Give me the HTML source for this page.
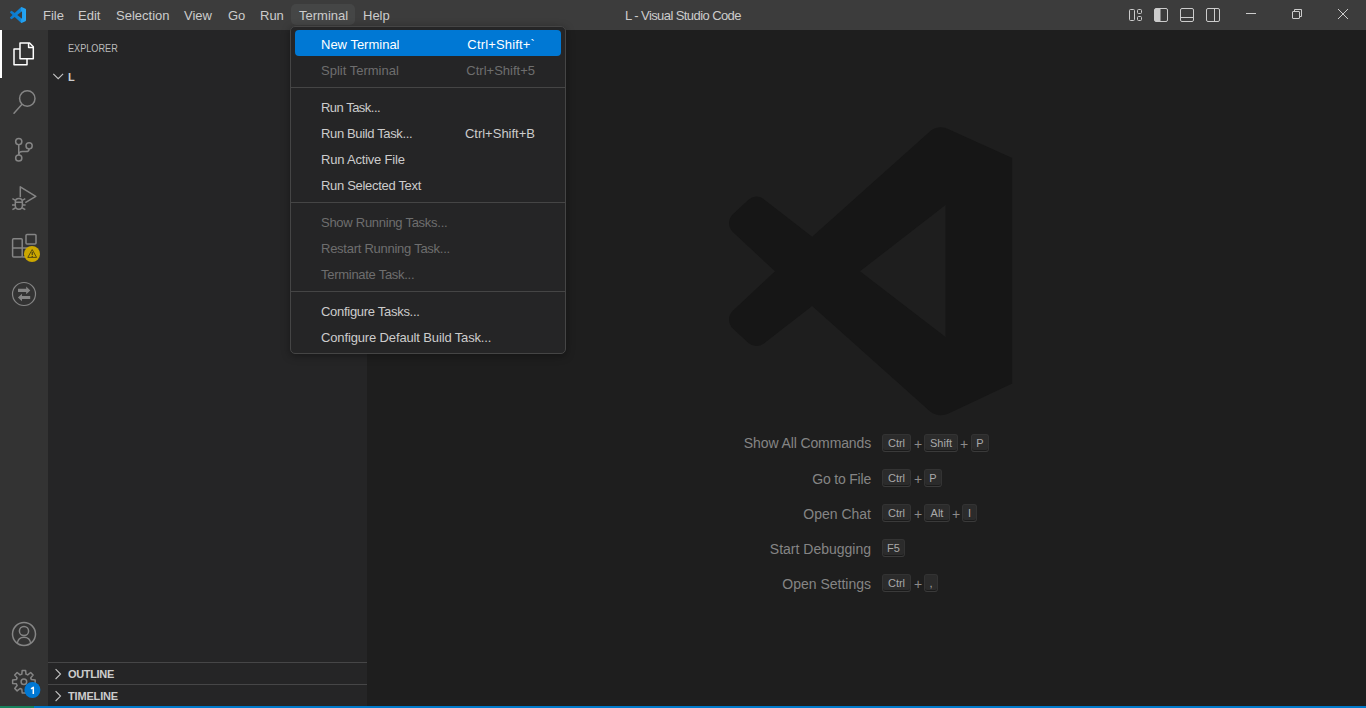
<!DOCTYPE html>
<html><head><meta charset="utf-8">
<style>
*{box-sizing:border-box;margin:0;padding:0}
html,body{width:1366px;height:708px;overflow:hidden;background:#1e1e1e;font-family:"Liberation Sans",sans-serif;color:#cccccc}
.abs{position:absolute}
#title{left:0;top:0;width:1366px;height:30px;background:#3c3c3c}
#act{left:0;top:30px;width:48px;height:676px;background:#333333}
#side{left:48px;top:30px;width:319px;height:676px;background:#252526}
#editor{left:367px;top:30px;width:999px;height:676px;background:#1e1e1e}
#status{left:0;top:706px;width:1366px;height:2px;background:#007acc}
#remote{left:0;top:706px;width:34px;height:2px;background:#16825d}
.mi{position:absolute;top:1px;height:30px;line-height:30px;font-size:13px;color:#cccccc;white-space:pre}
#wintitle{position:absolute;left:0;width:1366px;top:1px;height:30px;line-height:30px;text-align:center;font-size:13px;color:#cccccc}
#menu{left:290px;top:26px;width:276px;height:328px;background:#252526;border:1px solid #454545;border-radius:5px;box-shadow:0 2px 8px rgba(0,0,0,.36)}
.it{position:absolute;left:4px;width:266px;height:26px;line-height:26px;font-size:13px;color:#cccccc;white-space:pre}
.it .l{position:absolute;left:26px;top:2px}
.it .k{position:absolute;right:26px;top:2px}
.it.sel{background:#0078d4;color:#ffffff;border-radius:4px}
.it.dis{color:#6e6e6e}
.sep{position:absolute;left:0;width:274px;height:1px;background:#454545}
.hint{position:absolute;font-size:14px;line-height:16px;color:#858585;white-space:pre;text-align:right;width:200px}
.key{position:absolute;height:18px;line-height:16px;font-size:11px;color:#a9a9a9;background:#2b2b2b;border:1px solid #333333;border-bottom-color:#3a3a3a;border-radius:3px;text-align:center;box-shadow:inset 0 -1px 0 rgba(0,0,0,.36)}
.plus{position:absolute;font-size:14px;line-height:16px;color:#8b8b8b;margin-top:2px}
.sh{position:absolute;left:68px;font-size:11px;font-weight:bold;color:#cccccc;white-space:pre}
</style></head><body>
<div id="title" class="abs">
  <div id="wintitle" style="letter-spacing:-.58px">L - Visual Studio Code</div>
  <span class="mi" style="left:43px">File</span>
  <span class="mi" style="left:78px">Edit</span>
  <span class="mi" style="left:116px">Selection</span>
  <span class="mi" style="left:184px">View</span>
  <span class="mi" style="left:228px">Go</span>
  <span class="mi" style="left:260px">Run</span>
  <div class="abs" style="left:291px;top:4px;width:64px;height:21px;background:rgba(90,93,94,.31);border-radius:5px"></div>
  <span class="mi" style="left:299px">Terminal</span>
  <span class="mi" style="left:363px">Help</span>
</div>
<div id="act" class="abs"></div>
<div id="side" class="abs">
  <div class="abs" style="left:20px;top:11px;font-size:11px;line-height:14px;color:#bbbbbb;white-space:pre;transform:scaleX(.83);transform-origin:0 0">EXPLORER</div>
  <div class="abs" style="left:20px;top:40px;font-size:11px;line-height:14px;font-weight:bold;color:#cccccc">L</div>
  <div class="abs" style="left:0;top:632px;width:319px;height:1px;background:#464647"></div>
  <div class="abs" style="left:0;top:654px;width:319px;height:1px;background:#464647"></div>
  <div class="sh" style="left:20px;top:637px;line-height:14px;letter-spacing:-.33px">OUTLINE</div>
  <div class="sh" style="left:20px;top:659px;line-height:14px;letter-spacing:-.17px">TIMELINE</div>
</div>
<div id="editor" class="abs">
  <div class="hint" style="left:304px;top:405px;letter-spacing:-.11px;margin-left:.11px">Show All Commands</div>
  <div class="hint" style="left:304px;top:441px;letter-spacing:-.19px">Go to File</div>
  <div class="hint" style="left:304px;top:476px">Open Chat</div>
  <div class="hint" style="left:304px;top:511px">Start Debugging</div>
  <div class="hint" style="left:304px;top:546px">Open Settings</div>
</div>
<div id="keys">
  <div class="key" style="left:882px;top:434px;width:29px">Ctrl</div><div class="plus" style="left:914px;top:434px">+</div>
  <div class="key" style="left:924px;top:434px;width:34px">Shift</div><div class="plus" style="left:960px;top:434px">+</div>
  <div class="key" style="left:971px;top:434px;width:18px">P</div>
  <div class="key" style="left:882px;top:469px;width:29px">Ctrl</div><div class="plus" style="left:914px;top:469px">+</div>
  <div class="key" style="left:924px;top:469px;width:18px">P</div>
  <div class="key" style="left:882px;top:504px;width:29px">Ctrl</div><div class="plus" style="left:914px;top:504px">+</div>
  <div class="key" style="left:924px;top:504px;width:26px">Alt</div><div class="plus" style="left:952px;top:504px">+</div>
  <div class="key" style="left:962px;top:504px;width:15px">I</div>
  <div class="key" style="left:882px;top:539px;width:23px">F5</div>
  <div class="key" style="left:882px;top:574px;width:29px">Ctrl</div><div class="plus" style="left:914px;top:574px">+</div>
  <div class="key" style="left:924px;top:574px;width:14px">,</div>
</div>
<div id="status" class="abs"></div>
<div id="remote" class="abs"></div>

<svg class="abs" style="left:0;top:0" width="1366" height="708" viewBox="0 0 1366 708">
  <!-- watermark logo -->
  <g transform="translate(729,126.6) scale(11.8,12.06)" fill="#161616">
    <path d="M24 2.6L18.61.21a1.494 1.494 0 0 0-1.705.29l-9.86 8.63-4.12-3.128a.999.999 0 0 0-1.276.057L.327 7.261A1 1 0 0 0 .326 8.74L3.899 12 .326 15.26a1 1 0 0 0 .001 1.479L1.65 17.94a.999.999 0 0 0 1.276.057l4.12-3.128 9.86 8.63a1.492 1.492 0 0 0 1.704.29L24 21.3V2.6zM18.35 17.45L11.1 12l7.25-5.5z"/>
  </g>
  <!-- activity icons -->
  <rect x="0" y="30" width="2" height="48" fill="#ffffff"/>
  <g fill="none" stroke="#ffffff" stroke-width="1.5" stroke-linejoin="round">
    <path d="M20 58.7V43H29.6L33.3 46.7V58.7Z"/>
    <path d="M28.6 43V47.5H33.3"/>
    <path d="M20 49H14V64.8H27V58.7"/>
  </g>
  <g fill="none" stroke="#858585" stroke-width="1.5">
    <circle cx="27.3" cy="98.5" r="7.7"/>
    <path d="M14 113.2L21.8 104.6" stroke-linecap="round"/>
    <circle cx="18.75" cy="141.6" r="3.1"/>
    <circle cx="29.1" cy="145.8" r="3.1"/>
    <circle cx="18.75" cy="158" r="3.1"/>
    <path d="M18.75 144.7V154.9"/>
    <path d="M29.1 148.9C29.1 151 28 151.6 26 151.6H22.5C20.2 151.6 18.75 152.6 18.75 154.5"/>
    <path d="M20.3 197.2V186.8L35.8 196.3L25.3 202.6" stroke-linejoin="round"/>
    <path d="M15.3 202.2H22.4M15.3 205H12M22.4 205H25.6M15.4 200.3L12.4 198.6M22.3 200.3L25.3 198.6M15.4 208L12.4 209.6M22.3 208L25.3 209.6"/>
    <path d="M15.3 202.2C15.3 199.8 16.8 198.6 18.85 198.6C20.9 198.6 22.4 199.8 22.4 202.2V205.5C22.4 207.7 20.9 209.2 18.85 209.2C16.8 209.2 15.3 207.7 15.3 205.5Z"/>
    <rect x="12.6" y="238.8" width="9.6" height="18.3" rx="1"/>
    <path d="M12.6 248H31V257.1H22.2"/>
    <rect x="26" y="234.5" width="10" height="9.6" rx="1"/>
    <circle cx="24" cy="294" r="11.5" stroke-width="1.2"/>
    <circle cx="24" cy="634" r="11.5"/>
    <circle cx="24" cy="631" r="4.6"/>
    <path d="M17.3 643.5C17.6 639.6 20.4 637.2 24 637.2C27.6 637.2 30.4 639.6 30.7 643.5"/>
    <path d="M21.82 674.18 L22.20 670.43 L25.60 670.43 L25.98 674.18 L27.74 674.91 L30.67 672.52 L33.08 674.93 L30.69 677.86 L31.42 679.62 L35.17 680.00 L35.17 683.40 L31.42 683.78 L30.69 685.54 L33.08 688.47 L30.67 690.88 L27.74 688.49 L25.98 689.22 L25.60 692.97 L22.20 692.97 L21.82 689.22 L20.06 688.49 L17.13 690.88 L14.72 688.47 L17.11 685.54 L16.38 683.78 L12.63 683.40 L12.63 680.00 L16.38 679.62 L17.11 677.86 L14.72 674.93 L17.13 672.52 L20.06 674.91 Z" stroke-linejoin="round"/>
    <circle cx="23.9" cy="681.7" r="2.8"/>
  </g>
  <g fill="#858585">
    <path d="M18 288.8H26.2V286.6L30.3 290.4L26.2 294.2V292H18Z"/>
    <path d="M30.2 295.9H22V293.8L17.9 297.5L22 301.2V299H30.2Z"/>
  </g>
  <circle cx="32" cy="254" r="8" fill="#cca700" stroke="#333333" stroke-width="0"/>
  <path d="M32.2 249.6L36.6 257.4H27.8Z" fill="none" stroke="#3a3212" stroke-width=".8" stroke-linejoin="round"/>
  <path d="M32.2 252V255" stroke="#2a2a1a" stroke-width="1"/>
  <circle cx="32.2" cy="256.4" r=".55" fill="#2a2a1a"/>
  <circle cx="32.4" cy="690" r="8" fill="#0078d4"/>
  <path d="M33.3 694V687.3L31 688.9" fill="none" stroke="#ffffff" stroke-width="1.5" stroke-linejoin="round"/>
  <!-- title bar icons -->
  <g fill="none" stroke="#cccccc" stroke-width="1">
    <rect x="1129.5" y="9.5" width="5" height="11" rx="1"/>
    <rect x="1137.5" y="9.5" width="4" height="4" rx="1"/>
    <rect x="1137.5" y="16.5" width="4" height="4" rx="1"/>
    <rect x="1154.5" y="8.5" width="13" height="13" rx="1.5"/>
    <rect x="1180.5" y="8.5" width="13" height="13" rx="1.5"/>
    <path d="M1180.5 17.5H1193.5"/>
    <rect x="1206.5" y="8.5" width="13" height="13" rx="1.5"/>
    <path d="M1214.5 8.5V21.5"/>
    <path d="M1246 13.5H1256"/>
    <rect x="1292.5" y="11.5" width="7" height="7" rx=".5"/>
    <path d="M1294.5 11.5V9.5H1301.5V16.5H1299.5"/>
    <path d="M1338 9L1348 19M1348 9L1338 19"/>
  </g>
  <path d="M1155 9H1160.5V21H1155Z" fill="#cccccc"/>
  <!-- sidebar chevrons -->
  <g fill="none" stroke="#c5c5c5" stroke-width="1.1">
    <path d="M53.3 73.8L58.2 78.7L63.1 73.8"/>
    <path d="M55.6 669.2L60.5 674.1L55.6 679"/>
    <path d="M55.6 691.2L60.5 696.1L55.6 701"/>
  </g>
  <defs><linearGradient id="lg" x1="0" y1="0" x2="1" y2="0"><stop offset="0" stop-color="#0b78cc"/><stop offset=".7" stop-color="#0e86d8"/><stop offset=".72" stop-color="#1f9df0"/><stop offset="1" stop-color="#27a7f2"/></linearGradient></defs>
  <!-- title logo -->
  <g transform="translate(10,7) scale(0.6667)">
    <path fill="url(#lg)" d="M23.15 2.587L18.21.21a1.494 1.494 0 0 0-1.705.29l-9.46 8.63-4.12-3.128a.999.999 0 0 0-1.276.057L.327 7.261A1 1 0 0 0 .326 8.74L3.899 12 .326 15.26a1 1 0 0 0 .001 1.479L1.65 17.94a.999.999 0 0 0 1.276.057l4.12-3.128 9.46 8.63a1.492 1.492 0 0 0 1.704.29l4.942-2.377A1.5 1.5 0 0 0 24 20.06V3.939a1.5 1.5 0 0 0-.85-1.352zm-5.146 14.861L10.826 12l7.178-5.448v10.896z"/>
  </g>
</svg>

<div id="menu" class="abs">
  <div class="it sel" style="top:3px"><span class="l">New Terminal</span><span class="k" style="letter-spacing:.16px">Ctrl+Shift+`</span></div>
  <div class="it dis" style="top:29px"><span class="l">Split Terminal</span><span class="k">Ctrl+Shift+5</span></div>
  <div class="sep" style="top:60px"></div>
  <div class="it" style="top:66px"><span class="l" style="letter-spacing:-.52px">Run Task...</span></div>
  <div class="it" style="top:92px"><span class="l" style="letter-spacing:-.36px">Run Build Task...</span><span class="k">Ctrl+Shift+B</span></div>
  <div class="it" style="top:118px"><span class="l" style="letter-spacing:-.2px">Run Active File</span></div>
  <div class="it" style="top:144px"><span class="l" style="letter-spacing:-.31px">Run Selected Text</span></div>
  <div class="sep" style="top:175px"></div>
  <div class="it dis" style="top:181px"><span class="l" style="letter-spacing:-.27px">Show Running Tasks...</span></div>
  <div class="it dis" style="top:207px"><span class="l" style="letter-spacing:-.26px">Restart Running Task...</span></div>
  <div class="it dis" style="top:233px"><span class="l" style="letter-spacing:-.28px">Terminate Task...</span></div>
  <div class="sep" style="top:264px"></div>
  <div class="it" style="top:270px"><span class="l" style="letter-spacing:-.29px">Configure Tasks...</span></div>
  <div class="it" style="top:296px"><span class="l" style="letter-spacing:-.14px">Configure Default Build Task...</span></div>
</div>
</body></html>
